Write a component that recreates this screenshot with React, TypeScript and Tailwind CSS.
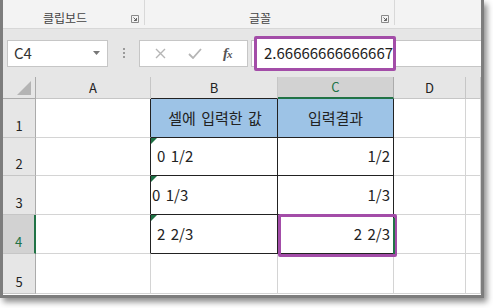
import React from "react";

const GRID = "border-[#d4d4d4]";

function Tri() {
  return (
    <svg className="absolute left-0 top-0" width="6" height="6" viewBox="0 0 6 6">
      <polygon points="0,0 6,0 0,6" fill="#1e7145" />
    </svg>
  );
}

function Launcher() {
  return (
    <svg width="8" height="8" viewBox="0 0 8 8">
      <path d="M0.5 0.5h7v7" fill="none" stroke="#8a8a8a" />
      <path d="M0.5 0.5v7h7" fill="none" stroke="#8a8a8a" />
      <path d="M2.5 2.5l3 3M3 5.5h2.5V3" fill="none" stroke="#666" />
    </svg>
  );
}

export default function App() {
  const widths = [33, 115, 127, 116, 72, 15];
  const rowH = [39, 38, 39, 39, 40];
  return (
    <div className="w-[493px] h-[308px] bg-white font-['Noto_Sans_CJK_KR','Noto_Sans',sans-serif] text-[#222]">
      <div className="relative w-[484px] h-[298px] border-l-[3px] border-r-[3px] border-b-[3px] border-[#7d7d7d] shadow-[3px_4px_6px_rgba(0,0,0,0.45)] bg-white overflow-hidden">
        {/* Ribbon */}
        <div className="flex h-[29px] bg-[#f3f3f3] border-b border-[#d7d7d7]">
          <div className="w-[141px] flex items-end pb-[3px]">
            <div className="flex-1 text-center text-[12px] leading-[14px] text-[#444] pr-[4px]">클립보드</div>
            <div className="mr-[5px] mb-[2px]"><Launcher /></div>
          </div>
          <div className="w-px h-[25px] bg-[#d8d8d8]" />
          <div className="w-[249px] flex items-end pb-[3px]">
            <div className="flex-1 text-center text-[12px] leading-[14px] text-[#444] pr-[6px]">글꼴</div>
            <div className="mr-[5px] mb-[2px]"><Launcher /></div>
          </div>
          <div className="w-px h-[25px] bg-[#d8d8d8]" />
        </div>

        {/* Formula bar */}
        <div className="flex items-center h-[48px] bg-[#e6e6e6] pl-[4px]">
          <div className="w-[101px] h-[27px] bg-white border border-[#c6c6c6] flex items-center justify-between pl-[6px] pr-[7px]">
            <span className="text-[15px] text-[#333]">C4</span>
            <svg width="7" height="4" viewBox="0 0 7 4"><polygon points="0,0 7,0 3.5,4" fill="#777" /></svg>
          </div>
          <div className="w-[31px] flex flex-col items-center gap-[2px]">
            <div className="w-[2px] h-[2px] bg-[#9a9a9a]" />
            <div className="w-[2px] h-[2px] bg-[#9a9a9a]" />
            <div className="w-[2px] h-[2px] bg-[#9a9a9a]" />
          </div>
          <div className="w-[109px] h-[27px] bg-white border border-[#c6c6c6] flex items-center pl-[15px]">
            <svg width="11" height="11" viewBox="0 0 11 11"><path d="M1 1l9 9M10 1l-9 9" stroke="#b5b5b5" strokeWidth="1.4" /></svg>
            <svg className="ml-[22px]" width="14" height="11" viewBox="0 0 14 11"><path d="M1 6l4 4 8-9" fill="none" stroke="#b5b5b5" strokeWidth="1.8" /></svg>
            <span className="ml-[21px] text-[15px] italic font-bold font-['Liberation_Serif',serif] text-[#555] tracking-[-1px]">f<span className="text-[11px]">x</span></span>
          </div>
          <div className="w-[3px]" />
          <div className="flex-1 h-[27px] bg-white border-y border-l border-[#c6c6c6]" />
        </div>

        {/* Grid */}
        <div className="flex flex-col">
          <div className="flex h-[22px]">
            <div className="relative bg-[#e6e6e6] border-r border-b border-[#ababab]" style={{ width: widths[0] }}>
              <svg className="absolute right-[4px] bottom-[3px]" width="14" height="14" viewBox="0 0 14 14"><polygon points="14,0 14,14 0,14" fill="#b4b4b4" /></svg>
            </div>
            {["A", "B", "C", "D", ""].map((c, i) => {
              const sel = c === "C";
              return (
                <div
                  key={i}
                  className={
                    "flex items-center justify-center text-[13px] " +
                    (sel
                      ? "bg-[#d2d2d2] text-[#217346] border-b-2 border-b-[#217346] border-r border-r-[#ababab]"
                      : "bg-[#e6e6e6] text-[#222] border-b border-r border-[#c6c6c6]") +
                    (c === "B" ? " border-b-[#222]" : "")
                  }
                  style={{ width: widths[i + 1] }}
                >
                  {c}
                </div>
              );
            })}
          </div>
          {rowH.map((h, r) => {
            const rn = r + 1;
            const inBox = rn <= 4;
            const selRow = rn === 4;
            return (
              <div key={r} className="flex" style={{ height: h }}>
                <div
                  className={
                    "flex items-end justify-center pb-[2px] text-[13px] border-b border-[#c6c6c6] " +
                    (selRow ? "bg-[#d2d2d2] text-[#217346] border-r-2 border-r-[#217346]" : "bg-[#e6e6e6] text-[#222] border-r border-r-[#ababab]")
                  }
                  style={{ width: widths[0] }}
                >
                  {rn}
                </div>
                <div className={"border-b " + GRID + " border-r " + (inBox ? "border-r-[#222]" : "border-r-[#d4d4d4]")} style={{ width: widths[1] }} />
                {/* B */}
                <div
                  className={
                    "relative flex items-center text-[15px] border-r [word-spacing:2px] " +
                    (inBox ? "border-r-[#222] border-b border-b-[#222] " : "border-r-[#d4d4d4] border-b border-b-[#d4d4d4] ") +
                    (rn === 1 ? "bg-[#9dc3e6] justify-center" : "") +
                    (rn === 2 || rn === 4 ? " pl-[6px]" : "") +
                    (rn === 3 ? " pl-[1px]" : "")
                  }
                  style={{ width: widths[2] }}
                >
                  {rn >= 2 && rn <= 4 && <Tri />}
                  {rn === 1 && <span className="ml-[2px]">셀에 입력한 값</span>}
                  {rn === 2 && "0 1/2"}
                  {rn === 3 && "0 1/3"}
                  {rn === 4 && "2 2/3"}
                </div>
                {/* C */}
                <div
                  className={
                    "relative flex items-center text-[15px] border-r [word-spacing:2px] " +
                    (inBox ? "border-r-[#222] border-b border-b-[#222] " : "border-r-[#d4d4d4] border-b border-b-[#d4d4d4] ") +
                    (rn === 1 ? "bg-[#9dc3e6] justify-center" : "justify-end pr-[3px]")
                  }
                  style={{ width: widths[3] }}
                >
                  {rn === 1 && "입력결과"}
                  {rn === 2 && "1/2"}
                  {rn === 3 && "1/3"}
                  {rn === 4 && "2 2/3"}
                </div>
                <div className={"border-b border-r " + GRID} style={{ width: widths[4] }} />
                <div className={"border-b border-r " + GRID} style={{ width: widths[5] }} />
              </div>
            );
          })}
        </div>

        {/* Purple annotation boxes */}
        <div className="absolute left-[251px] top-[36px] w-[142px] h-[35px] border-[3px] border-[#a34da8] rounded-[2px] bg-white flex items-center pl-[7px] text-[15px] text-[#222]">
          2.66666666666667
        </div>
        <div className="absolute left-[275px] top-[214px] w-[119px] h-[43px] border-[3px] border-[#a34da8] rounded-[2px]" />
        <div className="absolute left-[390px] top-[218px] w-[2px] h-[36px] bg-[#217346]" />
      </div>
    </div>
  );
}
